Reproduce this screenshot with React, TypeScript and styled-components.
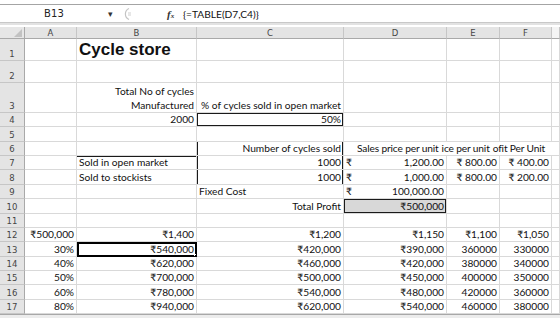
import React, { FC } from "react";
import styled, { createGlobalStyle } from "styled-components";

type Align = "l" | "r" | "c";

interface CellSpec {
  t?: React.ReactNode;
  a?: Align;
  edge?: string; // dark borders: t r b l
  bold?: boolean;
  fill?: boolean;
  span?: number;
  wrap?: boolean;
  acct?: [string, string];
  sel?: boolean;
}

const COLS = ["A", "B", "C", "D", "E", "F"];

const r = (t: string): CellSpec => ({ t, a: "r" });
const l = (t: string): CellSpec => ({ t, a: "l" });
const money = (v: string): CellSpec => ({ acct: ["₹", v] });
const E: CellSpec = {};

const rows: { n: string; h: string; cells: CellSpec[] }[] = [
  { n: "1", h: "22px", cells: [E, { t: "Cycle store", a: "l", bold: true }, E, E, E, E] },
  { n: "2", h: "22px", cells: [E, E, E, E, E, E] },
  {
    n: "3",
    h: "30px",
    cells: [E, { t: "Total No of cycles Manufactured", a: "r", wrap: true }, { t: "% of cycles sold in open market", a: "r" }, E, E, E],
  },
  { n: "4", h: "14.36px", cells: [E, r("2000"), { t: "50%", a: "r", edge: "trbl" }, E, E, E] },
  { n: "5", h: "14.36px", cells: [E, E, E, E, E, E] },
  {
    n: "6",
    h: "14.36px",
    cells: [E, E, { t: "Number of cycles sold", a: "r", edge: "rl" }, { span: 3 }],
  },
  {
    n: "7",
    h: "14.36px",
    cells: [E, { t: "Sold in open market", a: "l", edge: "t" }, { t: "1000", a: "r", edge: "rl" }, money("1,200.00"), r("₹ 800.00"), r("₹ 400.00")],
  },
  {
    n: "8",
    h: "14.36px",
    cells: [E, l("Sold to stockists"), { t: "1000", a: "r", edge: "rl" }, money("1,000.00"), r("₹ 800.00"), r("₹ 200.00")],
  },
  { n: "9", h: "14.36px", cells: [E, E, l("Fixed Cost"), money("100,000.00"), E, E] },
  { n: "10", h: "14.36px", cells: [E, E, r("Total Profit"), { t: "₹500,000", a: "r", edge: "trbl", fill: true }, E, E] },
  { n: "11", h: "14.36px", cells: [E, E, E, E, E, E] },
  { n: "12", h: "14.36px", cells: [r("₹500,000"), r("₹1,400"), r("₹1,200"), r("₹1,150"), r("₹1,100"), r("₹1,050")] },
  { n: "13", h: "14.36px", cells: [r("30%"), { t: "₹540,000", a: "r", sel: true }, r("₹420,000"), r("₹390,000"), r("360000"), r("330000")] },
  { n: "14", h: "14.36px", cells: [r("40%"), r("₹620,000"), r("₹460,000"), r("₹420,000"), r("380000"), r("340000")] },
  { n: "15", h: "14.36px", cells: [r("50%"), r("₹700,000"), r("₹500,000"), r("₹450,000"), r("400000"), r("350000")] },
  { n: "16", h: "14.36px", cells: [r("60%"), r("₹780,000"), r("₹540,000"), r("₹480,000"), r("420000"), r("360000")] },
  { n: "17", h: "14.36px", cells: [r("80%"), r("₹940,000"), r("₹620,000"), r("₹540,000"), r("460000"), r("380000")] },
];

const edgeShadow = (edge?: string) => {
  if (!edge) return "none";
  const parts: string[] = [];
  if (edge.includes("t")) parts.push("inset 0 1px 0 #1a1a1a");
  if (edge.includes("b")) parts.push("inset 0 -1px 0 #1a1a1a");
  if (edge.includes("l")) parts.push("inset 1px 0 0 #1a1a1a");
  if (edge.includes("r")) parts.push("inset -1px 0 0 #1a1a1a");
  return parts.join(", ");
};

const renderCell = (c: CellSpec, key: string) => {
  if (c.span === 3) {
    return (
      <HeadRun key={key} style={{ gridColumn: "span 3" }}>
        <span>Sales price per unit</span>
        <span>ice per unit</span>
        <span>ofit Per Unit</span>
      </HeadRun>
    );
  }
  return (
    <Cell
      key={key}
      $align={c.a || "l"}
      $bold={!!c.bold}
      $fill={!!c.fill}
      $wrap={!!c.wrap}
      $sel={!!c.sel}
      $acct={!!c.acct}
      style={{ boxShadow: edgeShadow(c.edge) }}
    >
      {c.acct ? (
        <>
          <span>{c.acct[0]}</span>
          <span>{c.acct[1]}</span>
        </>
      ) : (
        <Txt $wrap={!!c.wrap}>{c.t}</Txt>
      )}
      {c.sel && <Handle />}
    </Cell>
  );
};

const App: FC = () => {
  return (
    <>
      <GlobalStyle />
      <Window>
        <FormulaArea>
          <FormulaBar>
            <NameBox>B13</NameBox>
            <Drop>▾</Drop>
            <Ghost>
              <svg width="12" height="14" viewBox="0 0 12 14">
                <path d="M7 1.5 A6 6 0 0 0 7 12.5" fill="none" stroke="#c4c4c4" strokeWidth="1.2" />
                <path d="M6 6 h3 M6 8 h3" stroke="#cfcfcf" strokeWidth="1" />
              </svg>
            </Ghost>
            <Fx>
              f<small>x</small>
            </Fx>
            <Formula>{"{=TABLE(D7,C4)}"}</Formula>
          </FormulaBar>
        </FormulaArea>
        <Sheet $rows={rows.map((x) => x.h).join(" ")}>
          <Corner>
            <svg width="8" height="8" viewBox="0 0 8 8">
              <path d="M8 0 L8 8 L0 8 Z" fill="#c2c2c2" />
            </svg>
          </Corner>
          {COLS.map((c) => (
            <ColHead key={c}>{c}</ColHead>
          ))}
          <ColHead $last />
          {rows.map((row) => (
            <React.Fragment key={row.n}>
              <RowHead>{row.n}</RowHead>
              {row.cells.map((c, i) => renderCell(c, row.n + "-" + i))}
              <Cell $align="l" $bold={false} $fill={false} $wrap={false} $sel={false} $acct={false} />
            </React.Fragment>
          ))}
        </Sheet>
        <BottomEdge />
      </Window>
    </>
  );
};

export default App;

const GlobalStyle = createGlobalStyle`
  html, body { margin: 0; padding: 0; background: #fff; }
  body { width: 560px; height: 318px; overflow: hidden; }
`;

const Window = styled.div`
  width: 560px;
  height: 318px;
  display: flex;
  flex-direction: column;
  background: #fff;
  font-family: Lato, "Noto Sans", sans-serif;
  color: #111;
`;

const FormulaArea = styled.div`
  padding-top: 4px;
  height: 27px;
  box-sizing: border-box;
`;

const FormulaBar = styled.div`
  height: 19px;
  box-sizing: border-box;
  border-top: 1px solid #a4a4a4;
  border-bottom: 1px solid #c8c8c8;
  box-shadow: 0 2px 0 #e2e2e2;
  display: flex;
  align-items: center;
`;

const NameBox = styled.div`
  width: 108px;
  text-align: center;
  font-size: 10px;
  color: #222;
  font-family: "DejaVu Sans", sans-serif;
  letter-spacing: 0.2px;
`;

const Drop = styled.div`
  width: 10px;
  font-size: 9px;
  color: #333;
  font-family: "DejaVu Sans", sans-serif;
`;

const Ghost = styled.div`
  display: flex;
  margin-left: 4px;
  width: 45px;
`;

const Fx = styled.div`
  font-family: "Liberation Serif", serif;
  font-style: italic;
  font-weight: bold;
  font-size: 11px;
  color: #333;
  width: 15px;
  small {
    font-size: 7px;
  }
`;

const Formula = styled.div`
  font-family: Lato, "Noto Sans", sans-serif;
  font-size: 10.2px;
  color: #111;
  padding-left: 1px;
`;

const Sheet = styled.div<{ $rows: string }>`
  display: grid;
  grid-template-columns: 25px 52px 120px 147px 103px 53px 52px 8px;
  grid-template-rows: 12px ${(p) => p.$rows};
  font-size: 10.2px;
`;

const Corner = styled.div`
  background: #e6e6e6;
  border-right: 1px solid #a9a9a9;
  border-bottom: 1px solid #a9a9a9;
  box-sizing: border-box;
  display: flex;
  align-items: flex-end;
  justify-content: flex-end;
  padding: 0 2px 1px 0;
`;

const ColHead = styled.div<{ $last?: boolean }>`
  background: ${(p) => (p.$last ? "#f4f4f4" : "#e4e4e4")};
  border-right: 1px solid #c6c6c6;
  border-bottom: 1px solid #a9a9a9;
  box-sizing: border-box;
  font-family: "DejaVu Sans", sans-serif;
  font-size: 8.5px;
  color: #444;
  display: flex;
  align-items: center;
  justify-content: center;
`;

const RowHead = styled.div`
  background: #e4e4e4;
  border-right: 1px solid #a9a9a9;
  border-bottom: 1px solid #c6c6c6;
  box-sizing: border-box;
  font-family: "DejaVu Sans", sans-serif;
  font-size: 8.5px;
  color: #444;
  display: flex;
  align-items: flex-end;
  justify-content: center;
  padding-bottom: 1px;
`;

const Cell = styled.div<{
  $align: Align;
  $bold: boolean;
  $fill: boolean;
  $wrap: boolean;
  $sel: boolean;
  $acct: boolean;
}>`
  position: relative;
  box-sizing: border-box;
  border-right: 1px solid #d9d9d9;
  border-bottom: 1px solid #d9d9d9;
  background: ${(p) => (p.$fill ? "#d8d8d8" : "#fff")};
  display: flex;
  align-items: flex-end;
  justify-content: ${(p) =>
    p.$acct ? "space-between" : p.$align === "r" ? "flex-end" : p.$align === "c" ? "center" : "flex-start"};
  padding: 0 2px 0 2px;
  white-space: nowrap;
  min-width: 0;
  overflow: ${(p) => (p.$bold ? "visible" : "hidden")};
  font-family: ${(p) => (p.$bold ? '"Liberation Sans", Arial, sans-serif' : 'Lato, "Noto Sans", sans-serif')};
  font-size: ${(p) => (p.$bold ? "17px" : "10.2px")};
  font-weight: ${(p) => (p.$bold ? 700 : 400)};
  line-height: ${(p) => (p.$bold ? "20px" : "13px")};
  outline: ${(p) => (p.$sel ? "2px solid #000" : "none")};
  outline-offset: -2px;
  z-index: ${(p) => (p.$sel ? 2 : 0)};
`;

const Txt = styled.span<{ $wrap: boolean }>`
  white-space: ${(p) => (p.$wrap ? "normal" : "nowrap")};
  text-align: right;
  line-height: ${(p) => (p.$wrap ? "14px" : "inherit")};
  width: ${(p) => (p.$wrap ? "86px" : "auto")};
`;

const Handle = styled.div`
  position: absolute;
  right: -3px;
  bottom: -3px;
  width: 5px;
  height: 5px;
  background: #000;
  border: 1px solid #fff;
  box-sizing: border-box;
`;

const HeadRun = styled.div`
  box-sizing: border-box;
  border-bottom: 1px solid #d9d9d9;
  display: flex;
  align-items: flex-end;
  gap: 3px;
  padding-left: 13px;
  white-space: nowrap;
  overflow: hidden;
  font-size: 10.2px;
  line-height: 13px;
  letter-spacing: -0.15px;
`;

const BottomEdge = styled.div`
  flex: 1;
  background: #ececec;
  border-top: 1px solid #a8a8a8;
`;
